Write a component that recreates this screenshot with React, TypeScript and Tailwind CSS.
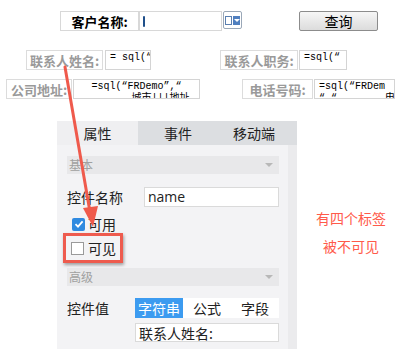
import React from "react";

const cjk = { fontFamily: '"Noto Sans CJK SC", "Noto Sans", sans-serif' };
const mono = { fontFamily: '"Liberation Mono", "Noto Sans CJK SC", monospace' };

function Label({ w, ml, text }: { w: number; ml: number; text: string }) {
  return (
    <div
      className="h-[20px] border border-[#dcdcdc] flex items-center justify-center text-[13px] font-bold text-[#9a9a9a] leading-none shrink-0 whitespace-nowrap"
      style={{ width: w, marginLeft: ml, ...cjk }}
    >
      {text}
    </div>
  );
}

function SqlBox({ w, ml, top, bottom }: { w: number; ml: number; top: string; bottom: string }) {
  return (
    <div
      className="h-[20px] border border-[#d4d4d4] bg-white overflow-hidden text-[10px] leading-[12px] text-black shrink-0 pl-[4px] pt-[1px] whitespace-pre"
      style={{ width: w, marginLeft: ml, ...mono }}
    >
      <div>{top}</div>
      <div>{bottom}</div>
    </div>
  );
}

function SectionHeader({ text }: { text: string }) {
  return (
    <div className="h-[18px] bg-[#e8e8ea] flex items-center justify-between pl-[2px] pr-[6px] text-[12px] text-[#a0a0a0]">
      <span>{text}</span>
      <span className="w-0 h-0 border-l-[4px] border-r-[4px] border-t-[4px] border-l-transparent border-r-transparent border-t-[#b8b8b8]" />
    </div>
  );
}

export default function App() {
  return (
    <div className="relative w-[399px] h-[350px] bg-white overflow-hidden" style={cjk}>
      {/* Row 1 */}
      <div className="flex items-start pt-[11px]">
        <div className="ml-[60px] w-[79px] h-[20px] border border-[#d8d8d8] flex items-center justify-center text-[13px] font-bold text-black leading-none">
          客户名称:
        </div>
        <div className="w-[83px] h-[20px] border border-[#d8d8d8] bg-white flex items-center pl-[3px]">
          <div className="w-[2px] h-[11px] bg-[#1f4f8a] rounded-[1px]" />
        </div>
        <div className="ml-[1px] w-[19px] h-[18px] border border-[#9aa8b8] rounded-[2px] bg-white flex items-center justify-center gap-[1px]">
          <div className="w-[7px] h-[9px] border border-[#5a7fb0] bg-white" />
          <div className="w-[7px] h-[9px] bg-[#4f7fbf] flex items-center justify-center">
            <span className="w-0 h-0 border-l-[3px] border-r-[3px] border-t-[3px] border-l-transparent border-r-transparent border-t-white" />
          </div>
        </div>
        <div className="ml-[57px] w-[79px] h-[20px] border border-[#8c8c8c] rounded-[2px] bg-gradient-to-b from-[#f6f6f6] to-[#dcdcdc] flex items-center justify-center text-[14px] text-black leading-none">
          查询
        </div>
      </div>

      {/* Row 2 */}
      <div className="flex items-start mt-[19px]">
        <Label w={77} ml={26} text="联系人姓名:" />
        <SqlBox w={46} ml={2} top={"= sql(“"} bottom={" ---"} />
        <Label w={78} ml={69} text="联系人职务:" />
        <SqlBox w={48} ml={1} top={"=sql(“"} bottom={" ---"} />
      </div>

      {/* Row 3 */}
      <div className="flex items-start mt-[9px]">
        <Label w={66} ml={6} text="公司地址:" />
        <div
          className="ml-[1px] w-[127px] h-[20px] border border-[#d4d4d4] bg-white overflow-hidden text-[10px] leading-[12px] text-black shrink-0 pt-[1px] whitespace-pre text-center"
          style={mono}
        >
          <div>=sql(“FRDemo”,“</div>
          <div>  -    ,城市|||地址</div>
        </div>
        <Label w={71} ml={42} text="电话号码:" />
        <SqlBox w={81} ml={1} top={"=sql(“FRDem"} bottom={"“,“  -    ,电"} />
      </div>

      {/* Panel + note */}
      <div className="flex items-start mt-[22px]">
        <div className="ml-[57px] w-[240px] h-[228px] bg-[#f3f3f5] flex flex-col">
          {/* tabs */}
          <div className="h-[24px] bg-[#dcdee1] flex text-[14px] text-[#222] leading-none">
            <div className="w-[81px] bg-[#efeff1] flex items-center justify-center">属性</div>
            <div className="w-[80px] flex items-center justify-center">事件</div>
            <div className="w-[72px] flex items-center justify-center">移动端</div>
          </div>
          <div className="flex flex-1">
            <div className="w-[231px] pl-[10px] pr-[9px] pt-[11px] flex flex-col">
              <SectionHeader text="基本" />
              <div className="flex items-center mt-[13px] h-[20px]">
                <span className="w-[77px] text-[14px] text-[#222] leading-none">控件名称</span>
                <div className="flex-1 h-[20px] bg-white border border-[#dadada] flex items-center pl-[3px] text-[14px] text-[#222] leading-none" style={{ fontFamily: '"Open Sans", "Noto Sans", sans-serif' }}>
                  name
                </div>
              </div>
              <div className="flex items-center mt-[9px] h-[16px] pl-[5px]">
                <div className="w-[13px] h-[13px] bg-[#2f8ae0] rounded-[2px] flex items-center justify-center">
                  <svg width="10" height="10" viewBox="0 0 10 10">
                    <path d="M1.5 5.2 L4 7.6 L8.6 2.4" stroke="white" strokeWidth="1.8" fill="none" />
                  </svg>
                </div>
                <span className="ml-[3px] text-[14px] text-[#222] leading-none">可用</span>
              </div>
              <div className="mt-[1px] -ml-[4px] w-[60px] h-[30px] border-[3px] border-[#ee5b4e] flex items-center pl-[5px] shadow-[1px_2px_3px_rgba(0,0,0,0.35)]">
                <div className="w-[13px] h-[13px] bg-white border border-[#9a9a9a]" />
                <span className="ml-[4px] text-[14px] text-[#222] leading-none">可见</span>
              </div>
              <div className="mt-[5px]">
                <SectionHeader text="高级" />
              </div>
              <div className="flex items-start mt-[12px]">
                <span className="w-[77px] text-[14px] text-[#222] leading-none mt-[3px]">控件值</span>
                <div className="flex-1 flex flex-col">
                  <div className="h-[20px] flex bg-white text-[14px] leading-none">
                    <div className="w-[48px] bg-[#3c9bf0] text-white flex items-center justify-center">字符串</div>
                    <div className="w-[48px] text-[#222] flex items-center justify-center">公式</div>
                    <div className="w-[48px] text-[#222] flex items-center justify-center">字段</div>
                  </div>
                  <div className="mt-[5px] h-[19px] bg-white border border-[#dadada] flex items-center pl-[3px] text-[14px] text-[#222] leading-none">
                    联系人姓名:
                  </div>
                </div>
              </div>
            </div>
            <div className="w-[9px] bg-[#ebebed]" />
          </div>
        </div>
        <div className="ml-[14px] mt-[83px] flex flex-col items-center text-[14px] text-[#ff5a4a] leading-[28px] w-[80px] whitespace-nowrap">
          <span>有四个标签</span>
          <span>被不可见</span>
        </div>
      </div>

      {/* Arrow overlay */}
      <svg className="absolute left-0 top-0 pointer-events-none" width="399" height="350">
        <line x1="65" y1="67" x2="90" y2="212" stroke="#ef5a4c" strokeWidth="3" strokeLinecap="round" />
        <polygon points="93,227 83,208 98,206" fill="#ef5a4c" />
      </svg>
    </div>
  );
}
